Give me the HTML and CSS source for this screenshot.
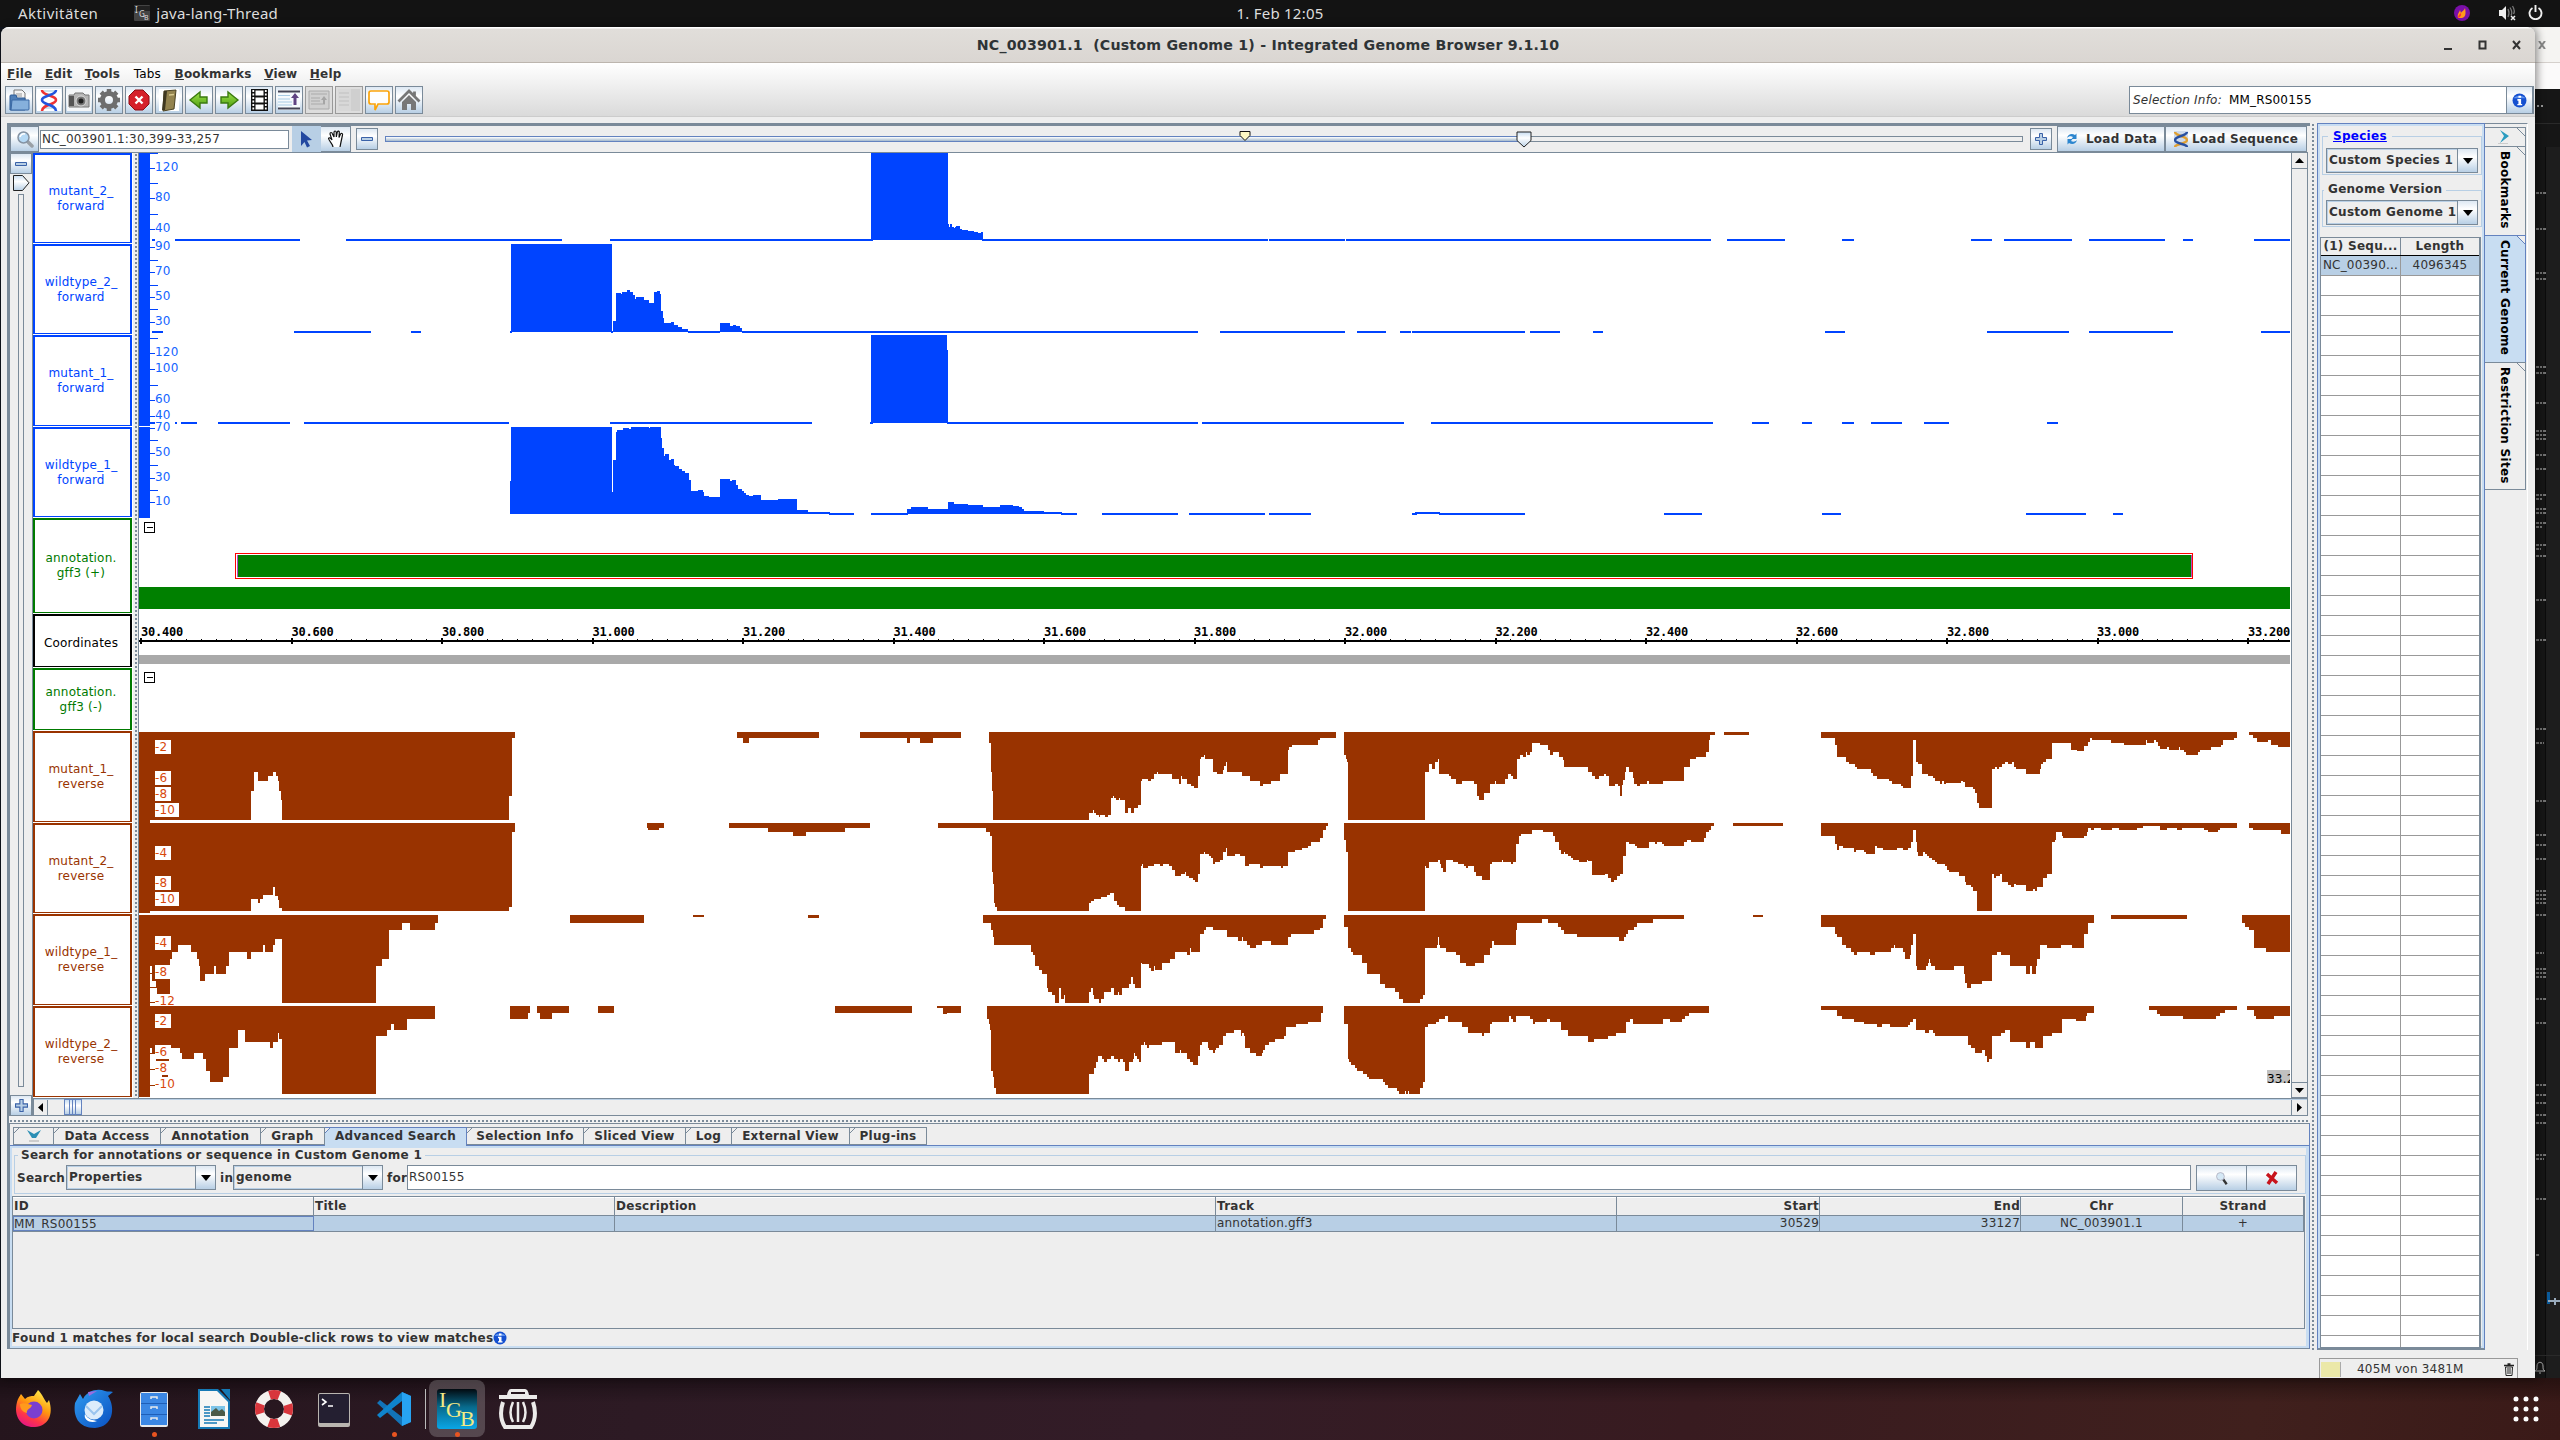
FILE: index.html
```html
<!DOCTYPE html>
<html lang="de">
<head>
<meta charset="utf-8">
<title>Integrated Genome Browser 9.1.10</title>
<link rel="stylesheet" href="styles.css">
</head>
<body>
<svg class="defs" width="0" height="0">
  <defs>
    <linearGradient id="metal" x1="0" y1="0" x2="0" y2="1"><stop offset="0" stop-color="#c8ddf2"/><stop offset=".4" stop-color="#fff"/><stop offset="1" stop-color="#b8cfe5"/></linearGradient>
    <linearGradient id="green" x1="0" y1="0" x2="0" y2="1"><stop offset="0" stop-color="#9be04a"/><stop offset="1" stop-color="#4f9f10"/></linearGradient>
    <linearGradient id="fire" x1=".8" y1="0" x2=".3" y2="1"><stop offset="0" stop-color="#fff44f"/><stop offset=".45" stop-color="#ff980e"/><stop offset=".75" stop-color="#ff3647"/><stop offset="1" stop-color="#e31587"/></linearGradient>
    <linearGradient id="bird" x1="0" y1="0" x2="1" y2="1"><stop offset="0" stop-color="#2f9bf0"/><stop offset="1" stop-color="#0a4fc0"/></linearGradient>
    <linearGradient id="igb" x1="0" y1="0" x2="0" y2="1"><stop offset="0" stop-color="#020a10"/><stop offset=".45" stop-color="#086a8c"/><stop offset="1" stop-color="#0aa6e6"/></linearGradient>
    <symbol id="plus" viewBox="0 0 12 12"><path d="M4.5.5h3v4h4v3h-4v4h-3v-4h-4v-3h4z" fill="#b8cfe5" stroke="#3a62a8"/></symbol>
    <symbol id="minus" viewBox="0 0 12 12"><path d="M.5 4.500h11v3H.5z" fill="#b8cfe5" stroke="#3a62a8"/></symbol>
    <symbol id="info" viewBox="0 0 14 14"><circle cx="7" cy="7" r="6.5" fill="#1550d0"/><path d="M1.500 5a6 4 0 0 1 11 0z" fill="#5e92ee"/><path d="M6 2.500h2.500v2H6zM5 5.700h3.500v4.500h1v1.300H5v-1.300h1v-3H5z" fill="#fff"/></symbol>
    <symbol id="lens" viewBox="0 0 18 18"><path d="M11 11l5 5" stroke="#9aa0a6" stroke-width="3.500" stroke-linecap="round"/><circle cx="7.500" cy="7.500" r="5.500" fill="#b5d9f5" stroke="#8593a3" stroke-width="1.500"/><path d="M4 7a4 4 0 0 1 5-3" stroke="#fff" stroke-width="1.500" fill="none"/></symbol>
  </defs>
</svg>

<header class="topbar">
  <span class="activities">Aktivitäten</span>
  <svg class="appico" width="16" height="16" viewBox="0 0 16 16"><rect width="16" height="16" rx="1" fill="#444"/><rect y="1" width="16" height="5" fill="#222"/><text x="1" y="8" font-size="8" fill="#ddd">I</text><text x="5" y="12" font-size="8" fill="#ddd">G</text><text x="10" y="15" font-size="7" fill="#ddd">B</text></svg>
  <span>java-lang-Thread</span>
  <span class="clock">1. Feb 12:05</span>
  <span class="tray">
    <svg width="16" height="16" viewBox="0 0 16 16"><circle cx="8" cy="8" r="8" fill="#7a0fa8"/><path d="M4 13c-1-4 1-5 2-8l1 3c1-2 3-2 4-5 1 5 1 9-3 10z" fill="#ff9a1a"/><path d="M4 13c0-3 2-4 3-5 0 2 1 3-3 5z" fill="#f33"/></svg>
    <svg class="vol" width="18" height="16" viewBox="0 0 18 16"><path d="M0 5h3l4-4v14l-4-4H0z" fill="#eee"/><path d="M9 4q2 4 0 8M11 2.500q3 5 1 8M13.500 1q3 5 1 8" fill="none" stroke="#777" stroke-width="1.300"/><path d="M12 11l4 4M16 11l-4 4" stroke="#eee" stroke-width="1.500"/></svg>
    <svg width="15" height="15" viewBox="0 0 15 15"><path d="M4.500 3a6 6 0 1 0 6 0M7.500 0v7" fill="none" stroke="#eee" stroke-width="1.900"/></svg>
  </span>
</header>

<main class="workspace">
  <section class="backwin">
    <div class="bt"><svg width="8" height="8" viewBox="0 0 8 8"><path d="M1 0l6 8M7 0L1 8" stroke="#888" stroke-width="2"/></svg></div>
    <div class="bm"></div>
    <div class="bc">
      <svg width="25" height="1289" viewBox="2535 89 25 1289" shape-rendering="crispEdges">
        <path d="M2546 147h14v1231h-14z" fill="#1d1d1d"/><path d="M2545 147h1v1231h-1z" fill="#0c0c0c"/><path d="M2535 123h25M2535 1355h25" stroke="#2a2a2a"/>
        <path d="M2537 106h2m2 0h2" stroke="#999" stroke-width="2"/>
        <path stroke="#707070" stroke-width="2" stroke-dasharray="3 1 2 1" d="M2536 193h10M2536 229h10M2536 273h10M2536 279h10M2536 367h10M2536 373h10M2536 403h10M2536 431h10M2536 435h10M2536 439h10M2536 455h10M2536 469h10M2536 495h10M2536 499h6M2536 509h10M2536 513h10M2536 523h10M2536 527h6M2536 545h10M2536 549h5M2536 556h10M2536 600h10M2536 640h10M2536 729h10M2536 743h8M2536 801h10M2536 835h10M2536 845h10M2536 859h10M2536 891h10M2536 895h10M2536 899h10M2536 903h10M2536 915h10M2536 953h8M2536 969h10M2536 973h10M2536 977h10M2536 999h10M2536 1023h10M2536 1085h10M2536 1095h10M2536 1103h10M2536 1115h10M2536 1123h10M2536 1155h10M2536 1159h8M2536 1199h10M2536 1255h3"/>
        <path d="M2547 1292h3v12h-3z" fill="#0a5a9a"/><path d="M2548 1301h12M2555 1298v7" stroke="#9ab" stroke-width="2"/>
        <path d="M2535 1371c2-1 2-2 2-5 0-5 6-5 6 0 0 3 0 4 2 5zM2539 1373h2" fill="none" stroke="#aaa" shape-rendering="auto"/>
      </svg>
    </div>
  </section>

  <section class="window">
    <div class="titlebar"><span class="title">NC_003901.1&nbsp; (Custom Genome 1) - Integrated Genome Browser 9.1.10</span>
      <span class="wbtns">
        <svg width="9" height="10" viewBox="0 0 9 10"><path d="M0 8h8v2H0z" fill="#333"/></svg>
        <svg width="9" height="10" viewBox="0 0 9 10"><path d="M1.500 1.500h6v7h-6z" fill="none" stroke="#333" stroke-width="2"/></svg>
        <svg width="9" height="10" viewBox="0 0 9 10"><path d="M1 1l7 8M8 1L1 9" stroke="#333" stroke-width="2"/></svg>
      </span>
    </div>
    <div class="header">
      <nav class="menu"><b><u>F</u>ile</b><b><u>E</u>dit</b><b><u>T</u>ools</b><span>Tabs</span><b><u>B</u>ookmarks</b><b><u>V</u>iew</b><b><u>H</u>elp</b></nav>
      <div class="tools">
        <span class="tb"><svg viewBox="0 0 24 24"><path d="M7 2h8l3 3v8H7z" fill="#f4f4f4" stroke="#777"/><path d="M9 6h6M9 8h6" stroke="#999"/><path d="M3 22V8q0-1 1-1h5l1 3h8v12z" fill="#4f7fb8" stroke="#2f5c96"/><path d="M5 12h17v9q0 1-1 1H4z" fill="#86b0dc" stroke="#3a68a4"/></svg></span>
        <span class="tb"><svg viewBox="0 0 24 24"><path d="M0 1h24v22H0z" fill="#fff"/><path d="M7 3h10M8 6h8M8 16h8M7 20h10" stroke="#9cd" stroke-width="1.200"/><path d="M5 2c0 6 14 5 14 10s-14 4-14 11" fill="none" stroke="#e33" stroke-width="2.600"/><path d="M19 2c0 6-14 5-14 10s14 4 14 11" fill="none" stroke="#25d" stroke-width="2.600"/></svg></span>
        <span class="tb"><svg viewBox="0 0 24 24"><path d="M0 1h24v22H0z" fill="#f4f6f8"/><path d="M2 7h5l1-2h8l2 2h4v12H2z" fill="#b5b5b5" stroke="#777"/><path d="M2 8h5v10H2z" fill="#555"/><circle cx="14" cy="13" r="5" fill="#777" stroke="#ddd"/><circle cx="14" cy="13" r="2.500" fill="#222"/></svg></span>
        <span class="tb"><svg viewBox="0 0 24 24"><circle cx="12" cy="12" r="6.500" fill="none" stroke="#6e6e6e" stroke-width="5"/><path d="M12 1v4M12 19v4M1 12h4M19 12h4M4.200 4.200L7 7M17 17l2.800 2.800M19.800 4.200L17 7M7 17l-2.800 2.800" stroke="#6e6e6e" stroke-width="4.500"/></svg></span>
        <span class="tb"><svg viewBox="0 0 24 24"><path d="M8 2h8l6 6v8l-6 6H8l-6-6V8z" fill="#d5202a" stroke="#8c0d14"/><path d="M8.500 8.500l7 7M15.500 8.500l-7 7" stroke="#fff" stroke-width="2.400"/></svg></span>
        <span class="tb"><svg viewBox="0 0 24 24"><path d="M2 1h20v22H2z" fill="#fff"/><path d="M7 3l12-1-2 19-11 2z" fill="#93834f" stroke="#4b4223"/><path d="M7 3l3 0-2 19-3 0z" fill="#3f3820"/><path d="M12 7l5-.5" stroke="#d7c98f" stroke-width="1.500"/></svg></span>
        <span class="tb"><svg viewBox="0 0 24 24"><path d="M3 12l10-8v5h7v6h-7v5z" fill="url(#green)" stroke="#3a7a10" stroke-width="1.400"/></svg></span>
        <span class="tb"><svg viewBox="0 0 24 24"><path d="M21 12L11 4v5H4v6h7v5z" fill="url(#green)" stroke="#3a7a10" stroke-width="1.400"/></svg></span>
        <span class="tb"><svg viewBox="0 0 24 24"><path d="M4 1h17v22H4z" fill="#111"/><path d="M8.500 2.500h8v5h-8zM8.500 9.500h8v5h-8zM8.500 16.500h8v5h-8z" fill="#fff"/><path d="M6.300 2v21M18.800 2v21" stroke="#fff" stroke-width="1.800" stroke-dasharray="2 1.500"/></svg></span>
        <span class="tb"><svg viewBox="0 0 24 24"><path d="M1 2h22v20H1z" fill="#f5fafd"/><path d="M1 3.500h22M1 20.500h22" stroke="#445" stroke-width="2"/><path d="M1 7.500h12M1 11h12M1 14h14M1 17h14" stroke="#a8cbe4"/><path d="M18 5l4 5h-2.500v7h-3v-7H14z" fill="#5f4382"/></svg></span>
        <span class="tb off"><svg viewBox="0 0 24 24"><path d="M2 3h20v18H2z" fill="#d0d0d0" stroke="#aaa"/><path d="M4 6h16M4 10h9M4 13h9M4 16h14" stroke="#aaa"/><path d="M17 8l3 4h-2v4h-2v-4h-2z" fill="#a5a5a5"/></svg></span>
        <span class="tb off"><svg viewBox="0 0 24 24"><path d="M1 1h13v22H1z" fill="#d8d8d8"/><path d="M14 1h9v22h-9z" fill="#cfcfcf"/><path d="M2 5h10M2 9h10M2 13h10M2 17h10" stroke="#c0c0c0"/></svg></span>
        <span class="tb"><svg viewBox="0 0 24 24"><path d="M4 3h16q2 0 2 2v9q0 2-2 2h-9l-3 6v-6H4q-2 0-2-2V5q0-2 2-2z" fill="#fdfdfd" stroke="#fba40a" stroke-width="1.700"/></svg></span>
        <span class="tb"><svg viewBox="0 0 24 24"><path d="M1.500 13.500L12 3l10.500 10.500M17.500 3.500v5" fill="none" stroke="#777" stroke-width="2.800"/><path d="M5 14l7-7 7 7v8h-5v-6h-4v6H5z" fill="#777"/></svg></span>
      </div>
      <div class="selinfo"><i>Selection Info:</i><span>MM_RS00155</span><em class="ibtn"><svg width="15" height="15"><use href="#info"/></svg></em></div>
    </div>

    <div class="body">
      <div class="left">
        <section class="mapPane">
          <div class="zoombar">
            <span class="jb lens"><svg width="18" height="18"><use href="#lens"/></svg></span>
            <span class="loc">NC_003901.1:30,399-33,257</span>
            <span class="jb mode on"><svg width="16" height="18" viewBox="0 0 16 18"><path d="M3 1l11 9-5 .5 3 5.500-3 1.500-2.500-5.500L3 16z" fill="#2348a0"/></svg></span>
            <span class="jb mode"><svg width="18" height="18" viewBox="0 0 18 18"><path d="M6 17c0-3-4-6-4.500-8.500C2 7 4 8 5 10L3 4c0-2 2-2 2.500 0L7 7V2.500c0-2 2-2 2.300 0V7l1-5c.7-1.500 2.300-1 2 .7L12 7.500l1.500-3.500c1-1.300 2.500-.5 2 1L14 12l-1 5" fill="#fff" stroke="#111" stroke-width="1.200"/></svg></span>
            <span class="jb sq"><svg width="12" height="12"><use href="#minus"/></svg></span>
            <span class="hslider"><i class="fill"></i>
              <svg class="auto" width="12" height="10" viewBox="0 0 12 10"><path d="M1 .5h10v4L6 9.500l-5-5z" fill="#fdf8c4" stroke="#111"/></svg>
              <svg class="thumb" width="16" height="17" viewBox="0 0 16 17"><path d="M1 1h14v8.500L8 16 1 9.500z" fill="url(#metal)" stroke="#222"/></svg>
            </span>
            <span class="jb sq"><svg width="12" height="12"><use href="#plus"/></svg></span>
            <b class="jb load d"><svg width="14" height="14" viewBox="0 0 14 14"><path d="M2 6c1-4 5-5 8-3l1.500-1.500V7H6.500L8 5C6 4 4 4 2 6zM12 8c-1 4-5 5-8 3l-1.500 1.500V7h5L6 9c2 1 4 1 6-1z" fill="#2c86cf"/></svg>Load Data</b>
            <b class="jb load s"><svg width="14" height="17" viewBox="0 0 14 17"><path d="M0 0h14v17H0z" fill="#cdd9ea"/><path d="M1 1c0 4 12 4 12 8s-12 4-12 7" fill="none" stroke="#e0a030" stroke-width="2.500"/><path d="M13 1c0 4-12 4-12 8s12 4 12 7" fill="none" stroke="#2850a0" stroke-width="2.500"/></svg>Load Sequence</b>
          </div>
          <div class="maprow">
            <div class="vzoom">
              <span class="jb"><svg width="12" height="12"><use href="#minus"/></svg></span>
              <span class="vtrack"><svg width="17" height="16" viewBox="0 0 17 16"><path d="M.5.500h9L16 7.800 9.500 15.500h-9z" fill="url(#metal)" stroke="#222"/></svg></span>
              <span class="jb p"><svg width="13" height="13" viewBox="0 0 12 12"><use href="#plus"/></svg></span>
            </div>
            <div class="mapcol">
              <div class="mapview">
                <div class="labels">
                  <div class="lb blue h91">mutant_2_<br>forward</div>
                  <div class="lb blue h91">wildtype_2_<br>forward</div>
                  <div class="lb blue h92">mutant_1_<br>forward</div>
                  <div class="lb blue h91">wildtype_1_<br>forward</div>
                  <div class="lb green h96">annotation.<br>gff3 (+)</div>
                  <div class="lb black h54">Coordinates</div>
                  <div class="lb green h63">annotation.<br>gff3 (-)</div>
                  <div class="lb brown h92">mutant_1_<br>reverse</div>
                  <div class="lb brown h91">mutant_2_<br>reverse</div>
                  <div class="lb brown h92">wildtype_1_<br>reverse</div>
                  <div class="lb brown h92">wildtype_2_<br>reverse</div>
                </div>
                <div class="vsplit"></div>
                <svg class="canvas" width="2151" height="945" viewBox="139 153 2151 945">
                  <g class="fwd" shape-rendering="crispEdges">
                    <path d="M139 153h11v273h-11zM139 427h11v91h-11z"/>
                    <path class="base" d="M152 240h3M175 240h125M346 240h216M610 240h263M982 240h286M1269 240h76M1346 240h365M1727 240h58M1842 240h12M1971 240h21M2004 240h68M2089 240h76M2183 240h10M2254 240h36"/>
                    <path class="base" d="M152 332h11M294 332h77M411 332h10M510 332h2M611 332h2M688 332h32M742 332h456M1220 332h125M1357 332h29M1400 332h11M1412 332h113M1530 332h30M1593 332h10M1825 332h20M1987 332h82M2089 332h84M2261 332h29"/>
                    <path class="base" d="M150 423h5M175 423h2M181 423h16M218 423h72M304 423h205M610 423h202M870 423h3M947 423h251M1202 423h202M1431 423h282M1752 423h17M1802 423h10M1842 423h12M1871 423h31M1924 423h25M2047 423h11"/>
                    <path class="base" d="M871 514h37M1061 514h16M1102 514h76M1189 514h76M1269 514h42M1412 514h5M1439 514h86M1664 514h38M1822 514h19M2026 514h60M2113 514h10"/>
                    <path transform="scale(.54847 .33333)" d="M932 732H1116V996H932ZM1118 996V963H1123V879H1132V882H1134V876H1143V870H1149V876H1154V885H1158V897H1160V891H1174V900H1184V909H1192V876H1197V873H1203V882H1205V933H1208V954H1211V969H1223V966H1228V975H1236V981H1243V987H1255V996ZM1313 996V969H1331V978H1337V975H1342V978H1349V984H1352V996Z"/>
                    <path transform="translate(0 330) scale(.54847 .33333)" d="M930 552V453H932V291H1116V486H1118V390H1123V306H1125V300H1136V294H1147V297H1150V291H1183V294H1185V291H1205V324H1207V354H1211V378H1212V372H1220V390H1223V387H1229V405H1231V408H1238V417H1243V423H1249V429H1256V450H1260V483H1273V480H1282V486H1284V498H1293V501H1313V447H1331V453H1335V450H1342V465H1345V477H1352V483H1357V489H1361V495H1366V498H1373V495H1387V510H1418V507H1453V540H1473V546H1513V549H1557V555H1511V552Z"/>
                    <path transform="translate(860 120) scale(.54847 .33333)" d="M20 99H160V312H162V321H164V312H168V321H171V324H173V321H175V318H182V327H186V330H197V333H208V336H215V339H221V336H224V360H20ZM20 645H159V690H160V909H20ZM86 1182V1167H93V1161H124V1167H160V1146H171V1152H197V1155H224V1161H255V1155H279V1158H290V1161H295V1167H299V1173H335V1176H368V1182ZM1012 1176h45v6h-45z"/>
                    <path class="tick" d="M150 153.500h8M150 168.500h5M150 183.500h8M150 198.500h5M150 214.500h8M150 229.500h5M150 247.500h5M150 260.500h8M150 272.500h5M150 285.500h8M150 297.500h5M150 309.500h8M150 322.500h5M150 338.500h8M150 353.500h5M150 369.500h5M150 385.500h8M150 400.500h5M150 416.500h5M150 428.500h5M150 440.500h8M150 453.500h5M150 465.500h8M150 478.500h5M150 490.500h8M150 502.500h5"/>
                  </g>
                  <g class="fl">
                    <text x="155" y="171">120</text><text x="155" y="201">80</text><text x="155" y="232">40</text>
                    <text x="155" y="250">90</text><text x="155" y="275">70</text><text x="155" y="300">50</text><text x="155" y="325">30</text>
                    <text x="155" y="356">120</text><text x="155" y="372">100</text><text x="155" y="403">60</text><text x="155" y="419">40</text>
                    <text x="155" y="431">70</text><text x="155" y="456">50</text><text x="155" y="481">30</text><text x="155" y="505">10</text>
                  </g>
                  <g shape-rendering="crispEdges">
                    <path d="M144.500 522.500h10v10h-10zM147 527.500h6M144.500 672.500h10v10h-10zM147 677.500h6" fill="none" stroke="#000"/>
                    <path d="M235.500 553.500h1957v25h-1957z" fill="#fff" stroke="#f00"/>
                    <path d="M238 555h1953v22H238z" fill="#008000"/><path d="M237.500 555v22M2191.500 555v22" stroke="#b050c0"/>
                    <path d="M139 587h2151v22H139z" fill="#008000"/>
                    <path d="M139 641h2151" stroke="#000" stroke-width="2"/>
                    <path d="M140 641h2150" stroke="#000" stroke-width="6" stroke-dasharray="2 148.500"/>
                    <path d="M140.500 639.500h2150" stroke="#000" stroke-dasharray="1 14.050"/>
                    <path d="M139 655h2151v9H139z" fill="#a9a9a9"/>
                  </g>
                  <g class="ruler">
                    <text x="141" y="636">30.400</text><text x="291.500" y="636">30.600</text><text x="442" y="636">30.800</text><text x="592.500" y="636">31.000</text><text x="743" y="636">31.200</text><text x="893.500" y="636">31.400</text><text x="1044" y="636">31.600</text><text x="1194" y="636">31.800</text><text x="1345" y="636">32.000</text><text x="1495.500" y="636">32.200</text><text x="1646" y="636">32.400</text><text x="1796" y="636">32.600</text><text x="1947" y="636">32.800</text><text x="2097" y="636">33.000</text><text x="2248" y="636">33.200</text>
                  </g>
                  <g class="rev" shape-rendering="crispEdges">
                    <path d="M139 732h11v181h-11zM139 915h11v182h-11z"/>
                    <path transform="translate(0 720) scale(.54847 .33333)" d="M254 36H939V54H934V228H928V300H514V240H512V213H509V183H507V168H503V156H498V168H489V183H470V156H463V213H458V300H254ZM1344 36H1493V54H1366V69H1355V54H1344ZM254 309H939V336H934V561H928V573H514V564H509V540H507V528H501V501H498V525H480V537H474V549H470V537H458V573H254ZM1180 309H1211V324H1202V330H1181V324H1180ZM1329 309H1568V324H1541V336H1470V348H1446V336H1400V324H1329ZM254 585H799V609H793V630H748V609H733V630H709V717H696V738H686V849H514V657H501V675H498V696H483V675H480V696H458V717H450V696H418V738H412V762H394V738H390V762H374V783H365V738H363V717H359V696H348V675H325V696H314V717H310V822H286V804H284V783H277V738H254ZM1039 585H1174V609H1039ZM1264 585h20v6h-20zM1473 585h20v9h-20zM254 858H793V897H742V930H718V912H713V930H706V948H686V1122H514V957H509V939H507V966H498V984H492V966H447V930H434V984H418V1071H407V1086H383V1053H376V1017H370V999H354V1017H332V999H328V984H312V975H283V1000H277V984H254ZM284 1017h24v6h-24zM295 1065h11v6h-11zM930 858H966V879H963V897H930ZM979 858H1037V879H1006V897H985V879H979ZM1090 858h29v21h-29zM1522 858H1568V879H1522Z"/>
                    <path transform="translate(860 700) scale(.54847 .33333)" d="M0 96H184V114H133V129H109V114H91V129H86V114H0ZM235 96H868V114H838V120H835V135H788V141H783V150H780V222H766V243H749V252H735V258H729V243H711V228H697V216H669V186H667V198H664V210H661V222H651V216H644V177H629V165H627V171H622V177H620V228H616V264H609V258H603V252H596V237H587V228H585V252H582V237H569V222H543V216H541V222H536V237H531V243H525V237H514V243H512V315H507V324H500V339H494V324H489V339H483V300H474V294H472V300H467V294H463V288H461V294H458V345H452V351H447V345H438V351H436V345H431V339H427V330H425V339H418V360H242V273H241V216H239V129H235Z
                    M882 96H1559V105H1550V120H1548V156H1543V171H1524V177H1513V201H1502V243H1464V252H1439V243H1435V252H1422V258H1417V252H1411V234H1409V216H1402V201H1397V216H1395V240H1392V255H1390V288H1386V258H1382V252H1377V258H1366V228H1361V222H1357V228H1347V237H1340V228H1334V216H1328V201H1284V180H1281V171H1275V156H1264V165H1258V150H1254V135H1240V129H1226V156H1222V165H1216V156H1214V171H1208V165H1203V177H1197V237H1191V228H1187V222H1181V237H1176V252H1160V243H1158V252H1149V279H1138V300H1129V288H1125V252H1119V243H1098V252H1087V237H1078V228H1073V222H1056V177H1054V186H1048V207H1043V192H1037V216H1030V360H890V186H888V177H886V165H882Z
                    M0 369h18v15h-18zM142 369H853V378H850V390H844V414H839V426H822V438H817V444H806V450H793V456H780V498H771V504H768V498H735V504H729V492H709V498H702V468H693V462H684V468H669V444H667V456H662V480H656V486H647V492H644V474H640V468H636V462H629V456H627V462H620V522H616V546H611V540H607V534H600V528H594V516H592V522H585V528H574V510H569V498H563V492H552V498H547V492H536V498H525V504H516V492H514V498H512V633H483V621H472V615H469V603H463V579H456V585H450V591H439V597H427V603H421V609H418V633H250V621H246V609H244V552H242V516H241V408H237V396H230V384H142Z
                    M882 369H1557V378H1552V390H1548V396H1542V414H1538V426H1515V420H1508V426H1502V438H1466V432H1462V426H1453V432H1449V426H1439V444H1417V438H1413V432H1402V426H1397V468H1391V522H1386V528H1380V540H1375V546H1369V534H1364V522H1358V525H1335V483H1328V480H1326V486H1311V480H1300V474H1296V468H1290V462H1285V456H1284V462H1278V450H1274V426H1268V408H1264V396H1246V390H1226V402H1206V408H1202V432H1196V486H1191V492H1187V486H1173V480H1171V486H1153V492H1149V540H1134V528H1124V516H1119V498H1109V504H1105V498H1101V492H1090V486H1081V480H1068V516H1063V504H1060V492H1057V480H1054V486H1037V504H1032V498H1030V633H890V456H886V420H882Z
                    M224 645H850V657H844V684H839V690H828V702H786V711H780V735H749V723H733V735H722V744H711V735H706V723H698V711H697V723H689V711H669V690H644V681H631V690H627V702H620V756H603V744H602V765H596V756H574V777H565V789H551V810H538V798H536V813H531V804H527V792H514V789H512V864H502V852H498V831H494V852H491V864H478V885H472V876H470V885H463V864H458V876H445V897H439V909H436V897H427V885H425V864H422V876H418V909H374V885H372V897H367V864H363V909H356V885H350V876H343V864H341V822H332V810H326V798H319V765H315V756H312V735H244V711H242V690H239V669H224Z
                    M882 645H1502V657H1446V669H1417V681H1411V690H1400V702H1397V711H1393V723H1384V711H1307V702H1284V690H1278V681H1273V669H1254V657H1243V669H1198V690H1196V735H1156V723H1153V744H1149V765H1138V789H1121V798H1105V789H1094V765H1087V756H1068V744H1057V735H1056V711H1054V735H1052V744H1030V885H1026V897H1021V909H990V897H983V876H975V864H957V852H948V822H924V789H915V765H899V756H895V744H890V681H882Z
                    M0 918h95v21h-95zM140 918H184V939H159V942H151V924H140ZM232 918H844V939H841V966H817V972H795V981H777V1008H773V1017H757V1026H746V1035H738V1050H735V1059H733V1068H722V1059H711V1044H702V1008H700V999H697V1008H695V990H682V999H667V1008H662V1035H655V1044H649V1050H647V1059H644V1050H636V1044H634V1026H624V1035H620V1068H616V1095H607V1086H602V1077H596V1059H585V1050H583V1059H574V1026H551V1035H527V1044H523V1035H520V1026H518V1035H512V1086H509V1077H505V1068H502V1059H500V1077H498V1086H491V1113H483V1086H480V1077H474V1086H470V1077H463V1068H458V1077H450V1086H445V1077H442V1068H434V1086H430V1104H427V1122H418V1182H248V1164H244V1131H242V1113H239V990H237V972H235V957H232Z
                    M882 918H1548V939H1511V948H1505V957H1499V966H1477V957H1464V972H1409V957H1404V966H1397V999H1378V1008H1364V1017H1338V1026H1327V1008H1291V990H1278V966H1258V957H1253V966H1231V972H1227V957H1222V948H1196V966H1191V957H1187V948H1183V966H1153V972H1149V999H1138V1008H1134V999H1109V981H1098V966H1072V948H1067V957H1056V966H1050V972H1036V981H1030V1146H1026V1164H1021V1182H1001V1173H999V1182H996V1173H994V1182H983V1173H979V1164H963V1155H957V1146H954V1137H928V1131H924V1122H917V1113H906V1104H903V1095H895V1086H892V1077H890V972H882Z"/>
                    <path transform="translate(1700 700) scale(.54847 .33333)" d="M44 96h45v9h-45zM221 96H979V114H974V120H954V135H950V141H932V150H912V156H908V165H886V156H883V150H875V141H873V150H855V141H851V147H839V138H835V126H831V120H828V129H815V120H813V135H773V129H749V120H715V114H711V126H707V138H700V153H687V150H676V129H642V177H631V186H625V192H622V207H620V222H594V207H576V201H572V186H569V192H562V186H556V192H551V201H545V207H541V201H538V207H532V324H509V309H505V279H501V267H498V261H483V246H480V243H476V249H449V252H445V243H442V252H438V243H428V234H424V228H415V222H404V192H397V186H394V120H388V228H385V264H370V258H366V252H350V243H345V237H323V228H315V219H311V207H286V201H283V192H272V186H266V171H250V135H246V114H221ZM1001 96H1077V141H1054V135H1041V120H1035V126H1015V114H1009V105H1001Z
                    M60 369h91v9h-91zM221 369H979V384H948V390H944V396H926V390H919V384H879V390H870V384H851V390H839V378H808V384H797V390H764V384H751V390H731V384H718V390H713V384H707V396H705V408H700V414H662V408H660V396H649V420H647V426H642V522H633V534H625V561H614V573H610V567H607V573H594V555H576V552H572V561H567V555H562V546H551V522H547V528H540V534H536V522H532V633H505V573H498V561H494V555H485V546H483V528H472V516H454V510H450V498H446V492H432V486H428V480H423V474H417V468H413V462H410V456H406V468H397V456H396V426H394V390H388V426H385V444H380V450H370V444H359V450H334V444H322V438H319V462H303V456H299V450H284V456H281V444H261V438H253V450H250V432H246V408H221ZM1001 369H1077V402H1059V390H1009V384H1001Z
                    M97 645h18v6h-18zM221 645H718V669H707V702H700V744H678V735H658V744H633V735H620V777H614V798H613V822H605V798H602V822H594V798H565V765H549V756H541V765H532V843H514V852H494V864H487V849H483V822H481V798H463V810H428V798H422V789H419V777H418V789H415V798H412V810H396V798H394V702H388V735H385V765H383V777H374V756H370V744H356V735H354V744H348V756H319V765H310V756H286V765H281V756H275V744H266V735H259V711H250V702H246V681H221ZM749 645h139v12h-139zM988 645H1077V756H1032V744H1010V690H1001V681H994V669H988Z
                    M221 918H718V939H706V948H704V963H686V957H660V999H642V1008H625V1044H611V1026H602V1044H594V1026H565V990H556V999H549V1008H532V1077H527V1086H523V1068H520V1050H514V1059H501V1044H494V1035H489V1008H428V999H424V990H418V999H410V990H394V957H388V966H383V975H379V981H346V972H332V981H323V972H299V966H281V957H259V948H250V930H221ZM819 918H979V930H957V939H948V948H941V957H881V948H839V942H833V930H819ZM997 918H1077V948H1047V957H1014V948H1010V930H997Z"/>
                    <path class="tick" d="M150 973.500h5M150 987.500h6M150 1002.500h5M150 1053.500h5M150 1069.500h5M150 1085.500h5"/>
                    <path class="box" d="M155 740h16v14h-16zM155 771h16v14h-16zM155 787h16v14h-16zM155 803h24v14h-24zM155 846h16v14h-16zM155 876h16v14h-16zM155 892h24v14h-24zM155 936h16v14h-16zM155 965h16v14h-16zM155 1014h16v14h-16zM155 1045h16v13h-16z"/>
                  </g>
                  <g class="rl">
                    <text x="155" y="751">-2</text><text x="155" y="782">-6</text><text x="155" y="798">-8</text><text x="155" y="814">-10</text>
                    <text x="155" y="857">-4</text><text x="155" y="887">-8</text><text x="155" y="903">-10</text>
                    <text x="155" y="947">-4</text><text x="155" y="976">-8</text><text x="155" y="1005">-12</text>
                    <text x="155" y="1025">-2</text><text x="155" y="1056">-6</text><text x="155" y="1072">-8</text><text x="155" y="1088">-10</text>
                  </g>
                  <path d="M2267 1070h23v13h-23z" fill="#c0c0c0"/><text x="2267" y="1082.500">33.2</text>
                </svg>
                <div class="vscroll"><i class="ab"><svg width="9" height="5"><path d="M0 5L4.500 0 9 5z"/></svg></i><i class="ab end"><svg width="9" height="5"><path d="M0 0L4.500 5 9 0z"/></svg></i></div>
              </div>
              <div class="hscroll"><i class="ab"><svg width="5" height="9"><path d="M5 0L0 4.500 5 9z"/></svg></i><i class="hthumb"></i><i class="ab end"><svg width="5" height="9"><path d="M0 0l5 4.500L0 9z"/></svg></i></div>
            </div>
          </div>
        </section>
        <div class="hsplit"></div>
        <section class="tabsPane">
          <div class="tabs">
            <b class="tab w41"><svg width="14" height="12" viewBox="0 0 14 12"><path d="M0 0l7 4 7-4-5 8H5z" fill="#2b8fb5"/><path d="M2 11h10" stroke="#ccc" stroke-width="2"/></svg></b>
            <b class="tab w107">Data Access</b><b class="tab w100">Annotation</b><b class="tab w64">Graph</b><b class="tab w142 on">Advanced Search</b><b class="tab w117">Selection Info</b><b class="tab w102">Sliced View</b><b class="tab w46">Log</b><b class="tab w118">External View</b><b class="tab w77">Plug-ins</b>
          </div>
          <div class="tabbody">
            <fieldset class="search">
              <legend>Search for annotations or sequence in Custom Genome 1</legend>
              <b class="lead">Search</b><span class="combo c150">Properties<i><svg width="10" height="6"><path d="M0 0h10L5 6z"/></svg></i></span><b class="in">in</b><span class="combo c150">genome<i><svg width="10" height="6"><path d="M0 0h10L5 6z"/></svg></i></span><b class="for">for</b>
              <span class="field">RS00155</span>
              <span class="jb sb"><svg width="14" height="14" viewBox="0 0 18 18"><path d="M10 10l5 7" stroke="#333" stroke-width="3"/><circle cx="7" cy="7" r="5" fill="#d5e8f5" stroke="#aab"/></svg></span><span class="jb sb two"><svg width="14" height="14" viewBox="0 0 14 14"><path d="M2 3l10 9M11 1L3 13" stroke="#c8141c" stroke-width="3.500"/></svg></span>
            </fieldset>
            <div class="results">
              <div class="tr th"><b>ID</b><b>Title</b><b>Description</b><b>Track</b><b class="r">Start</b><b class="r">End</b><b class="c">Chr</b><b class="c">Strand</b></div>
              <div class="tr td"><span class="cur">MM_RS00155</span><span></span><span></span><span>annotation.gff3</span><span class="r">30529</span><span class="r">33127</span><span class="c">NC_003901.1</span><span class="c">+</span></div>
            </div>
            <div class="found">Found 1 matches for local search Double-click rows to view matches<svg width="14" height="14"><use href="#info"/></svg></div>
          </div>
        </section>
      </div>
      <div class="vsplit big"></div>
      <aside class="genome">
        <div class="grp g1"><a>Species</a><span class="combo full">Custom Species 1<i><svg width="10" height="6"><path d="M0 0h10L5 6z"/></svg></i></span></div>
        <div class="grp g2"><b>Genome Version</b><span class="combo full">Custom Genome 1<i><svg width="10" height="6"><path d="M0 0h10L5 6z"/></svg></i></span></div>
        <div class="seqs">
          <div class="sh"><b>(1) Sequ...</b><b>Length</b></div>
          <div class="sr"><span>NC_00390...</span><span>4096345</span></div>
          <div class="grid"></div>
        </div>
      </aside>
      <div class="sidetabs">
        <b class="st s0"><svg width="12" height="14" viewBox="0 0 12 14"><path d="M2 0l9 6-9 7 4-7z" fill="#2b9cc0"/><path d="M0 13.500h10" stroke="#ccc"/></svg></b>
        <b class="st s1">Bookmarks</b><b class="st s2 on">Current Genome</b><b class="st s3">Restriction Sites</b>
      </div>
    </div>
    <footer class="status"><div class="mem"><i></i><span>405M von 3481M</span><svg width="10" height="13" viewBox="0 0 10 13"><path d="M0 2.500h10M3.500 1h3" stroke="#222" stroke-width="1.500"/><path d="M1.500 4h7l-.5 8.500H2zM4 5v6M6 5v6" fill="none" stroke="#222"/></svg></div></footer>
  </section>
</main>

<footer class="dock">
  <div class="apps">
    <span class="app"><svg viewBox="0 0 40 40"><path d="M3 13c1-4 3-6 4-8l4 5c3-3 6-3 9-3 1-2 3-4 4-6 5 5 5 8 9 13l2-3c5 15-1 26-14 27C8 39-1 28 3 13z" fill="url(#fire)"/><circle cx="20" cy="21" r="8.500" fill="#7a3fd0"/><path d="M6 15c4-2 8 0 12 1-1 4-6 4-5 8-5-1-7-5-7-9z" fill="#ff9a1c"/></svg></span>
    <span class="app"><svg viewBox="0 0 40 40"><path d="M1 14l5-9 3 5c4-8 14-11 22-8 3 1 5 0 8 1l-5 4c8 12 5 31-13 32C4 39-1 27 1 14z" fill="url(#bird)"/><path d="M14 3l9-1-8 5z" fill="#9a6de0"/><circle cx="20" cy="21" r="9.500" fill="#dcecfb"/><path d="M12 17l8 8 8-8" fill="none" stroke="#9ac4ee" stroke-width="2"/><path d="M11 25c3 6 8 6 12 7-6 3-14-1-12-7z" fill="#fff"/></svg></span>
    <span class="app run"><svg viewBox="0 0 40 40"><rect x="6" y="3" width="28" height="35" rx="2" fill="#e8eaec"/><path d="M7 4h26v32H7z" fill="#3b87e4"/><path d="M7 14.500h26M7 25.500h26" stroke="#1f5fb8"/><path d="M17 10V8h6v2M17 20v-2h6v2M17 31v-2h6v2" fill="none" stroke="#e8eaec" stroke-width="1.500"/></svg></span>
    <span class="app"><svg viewBox="0 0 40 40"><path d="M4 0h20l12 12v28H4z" fill="#1579b5"/><path d="M6 2h17l11 11v25H6z" fill="#f6f6f4"/><path d="M27 0h9v11z" fill="#1579b5"/><path d="M10 18h6M10 21h6M10 24h6M10 27h6M10 31h20M10 34h13" stroke="#1579b5" stroke-width="1.600"/><path d="M17 17h14v10H17z" fill="#7cc4e8"/><path d="M17 27v-4l5-4 3 3 3-2 3 3v4z" fill="#4b5a48"/></svg></span>
    <span class="app"><svg viewBox="0 0 40 40"><circle cx="20" cy="20" r="14.500" fill="none" stroke="#f4f2ee" stroke-width="9"/><circle cx="20" cy="20" r="14.500" fill="none" stroke="#d8363c" stroke-width="9" stroke-dasharray="10 12.777" stroke-dashoffset="5"/></svg></span>
    <span class="app"><svg viewBox="0 0 40 40"><rect x="4" y="4" width="32" height="34" rx="2" fill="#b9b5b0"/><rect x="5" y="5" width="30" height="29" rx="1" fill="#241f31"/><path d="M8 10l4 3-4 3M14 17h5" fill="none" stroke="#fff" stroke-width="1.600"/></svg></span>
    <span class="app run"><svg viewBox="0 0 40 40"><path d="M28 3l9 4v26l-9 4L3 14l3-3 22 17z" fill="#1273b8"/><path d="M28 3L3 26l3 3 22-17z" fill="#0f84cc"/><path d="M28 3l9 4v26l-9 4z" fill="#27a3f2"/></svg></span>
    <i class="sep"></i>
    <span class="app run cur"><svg viewBox="0 0 40 40"><rect width="40" height="40" rx="3" fill="url(#igb)"/><g fill="#f3ea86" font-family="Liberation Serif" font-size="22" letter-spacing="0"><text x="2" y="18">I</text><text x="9" y="28">G</text><text x="23" y="37">B</text></g></svg></span>
    <span class="app"><svg viewBox="0 0 40 40"><path d="M1 6h8q1-6 4-6h14q3 0 4 6h8v4H1zM13 5h14V3H13z" fill="#ecebea" fill-rule="evenodd"/><path d="M5 13C2 22 2 30 7 38h26c5-8 5-16 2-25" fill="none" stroke="#ecebea" stroke-width="4"/><path d="M15 13q-5 11 0 20M20 13v20M25 13q5 11 0 20" fill="none" stroke="#ecebea" stroke-width="2.500"/></svg></span>
  </div>
  <svg class="launcher" width="26" height="26" viewBox="0 0 26 26"><path d="M3 3h.01M13 3h.01M23 3h.01M3 13h.01M13 13h.01M23 13h.01M3 23h.01M13 23h.01M23 23h.01" stroke="#fff" stroke-width="5" stroke-linecap="round"/></svg>
</footer>
</body>
</html>
```
FILE: styles.css
```css
* { box-sizing: border-box; }
body { margin: 0; width: 2560px; height: 1440px; overflow: hidden; display: flex; flex-direction: column; font: 12px/15px "DejaVu Sans", sans-serif; letter-spacing: .2px; color: #333; background: #2c1a24; }
svg { display: block; flex: none; }
b, span { white-space: nowrap; }
b, legend, .combo, .found, .grp > a { letter-spacing: .28px; }
.defs { position: absolute; }

.topbar { height: 27px; flex: none; background: #131313; color: #ddd; display: flex; align-items: center; padding: 0 17px 2px 18px; font: 15px/20px "Noto Sans", sans-serif; letter-spacing: .25px; position: relative; }
.activities { margin-right: 36px; letter-spacing: .45px; }
.appico { margin-right: 6px; letter-spacing: 0; overflow: visible; }
.clock { position: absolute; left: 0; right: 0; text-align: center; }
.tray { margin-left: auto; display: flex; align-items: center; }
.tray .vol { margin: 0 11px 0 29px; }

.workspace { position: relative; height: 1351px; flex: none; background: #10141c; }
.backwin { position: absolute; left: 2530px; right: 0; top: 0; bottom: 0; display: flex; flex-direction: column; }
.bt { height: 36px; background: #f5f4f2; border-bottom: 1px solid #d5d0cc; padding: 14px 0 0 8px; }
.bm { height: 26px; background: #fbfafa; }
.bc { flex: 1; background: #161616; padding-left: 5px; }
.window { position: absolute; left: 1px; top: 0; width: 2534px; height: 1351px; display: flex; flex-direction: column; background: #eee; border-radius: 8px 8px 0 0; overflow: hidden; box-shadow: 2px 0 8px rgba(0,0,0,.45); }
.titlebar { height: 36px; flex: none; background: linear-gradient(#fff 0 1px, #e1deda 2px, #dad6d2); border-bottom: 1px solid #bcb5ae; position: relative; display: flex; align-items: center; justify-content: center; }
.title { font: bold 14.2px/20px "DejaVu Sans", sans-serif; letter-spacing: .2px; color: #2e3436; }
.wbtns { position: absolute; right: 14px; top: 13px; display: flex; gap: 25px; }
.header { height: 54px; flex: none; background: linear-gradient(#fff, #dadada); border-bottom: 1px solid #ccc; display: grid; grid-template-columns: 1fr 404px; grid-template-rows: 23px 30px; }
.menu { grid-column: 1 / 3; display: flex; gap: 12.5px; padding: 4px 0 0 6px; }
.menu b { letter-spacing: .2px; }
.menu span { color: #000; margin: 0 1px; }
.tools { display: flex; gap: 2px; padding-left: 4px; }
.tb { width: 28px; height: 28px; border: 1px solid #7a8a99; background: linear-gradient(#dde8f3, #fff 35%, #b8cfe5); padding: 1px; }
.tb.off { background: #ddd; border-color: #999; }
.tb svg { width: 24px; height: 24px; }
.selinfo { height: 28px; width: 405px; background: #fff; border: 1px solid #7a8a99; display: flex; align-items: center; padding-left: 3px; margin-left: -2px; }
.selinfo span { color: #000; margin-left: 7px; }
.ibtn { margin-left: auto; width: 27px; height: 26px; border-left: 1px solid #7a8a99; border-right: 1px solid #7a8a99; background: linear-gradient(#dde8f3, #fff 35%, #b8cfe5); display: grid; place-items: center; }

.body { display: flex; padding: 6px 0 0 6px; height: 1233px; flex: none; }
.left { width: 2303px; flex: none; display: flex; flex-direction: column; }
.mapPane { height: 993px; flex: none; border: solid #7a8a99; border-width: 3px 0 0 3px; background: #eee; padding-right: 2px; }
.jb { border: 1px solid #7a8a99; background: linear-gradient(#dde8f3, #fff 35%, #b8cfe5); display: flex; align-items: center; justify-content: center; flex: none; }
.zoombar { height: 27px; border-bottom: 1px solid #7a8a99; display: flex; align-items: center; }
.lens { width: 29px; height: 26px; }
.loc { width: 249px; height: 19px; border: 1px solid #7a8a99; background: #fff; padding: 1px 1px; margin: 0 3px 0 1px; }
.mode { width: 30px; height: 26px; border-left: 0; }
.mode.on { width: 29px; background: #b8cfe5; border-color: #b8cfe5; }
.sq { width: 22px; height: 22px; margin-left: 5px; }
.hslider { position: relative; width: 1638px; height: 6px; margin: 0 2px 0 7px; border: 1px solid #7a8a99; background: #eee; }
.hslider .fill { position: absolute; left: -1px; top: -1px; width: 1139px; height: 6px; background: linear-gradient(#fff, #a3b8cc); border: 1px solid #6382bf; }
.hslider .auto { position: absolute; left: 853px; top: -6px; }
.hslider .thumb { position: absolute; left: 1130px; top: -6px; }
.load { height: 26px; gap: 7px; }
.load.d { width: 108px; margin-left: 5px; }
.load.s { width: 142px; gap: 4px; border-left-width: 1px; }
.maprow { display: flex; height: 963px; }
.vzoom { width: 23px; display: flex; flex-direction: column; border-right: 1px solid #7a8a99; }
.vzoom .jb { height: 21px; }
.vtrack { flex: 1; width: 6px; margin: 20px 0 8px 8px; border: 1px solid #7a8a99; position: relative; }
.vtrack svg { position: absolute; left: -6px; top: -20px; }
.mapcol { flex: 1; min-width: 0; }
.mapview { display: flex; height: 945px; background: #fff; }
.labels { width: 100px; padding-right: 1px; flex: none; display: flex; flex-direction: column; }
.lb { border: 2px solid; border-bottom-width: 1px; margin-bottom: 1px; padding-right: 3px; display: flex; align-items: center; justify-content: center; text-align: center; flex: none; }
.blue { color: #04f; } .green { color: #007a00; } .black { color: #000; padding-top: 5px; } .brown { color: #930; }
.h91 { height: 90px; } .h92 { height: 91px; } .h96 { height: 95px; } .h54 { height: 53px; } .h63 { height: 62px; }
.vsplit { width: 6px; flex: none; background: radial-gradient(circle, #7a8a99 .8px, transparent 1px) 0 0 / 6px 4px #eee; border-right: 1px solid #7a8a99; }
.vsplit.big { width: 7px; border: 0; }
.canvas { width: 2151px; height: 945px; font-family: "DejaVu Sans", sans-serif; font-size: 12px; }
.fwd { fill: #04f; } .rev { fill: #930; }
.base { stroke: #04f; stroke-width: 2; }
.fwd .tick { stroke: #04f; } .rev .tick { stroke: #930; } .rev .box { fill: #fff; }
.fl { fill: #1464ff; } .rl { fill: #d8480c; }
.ruler { font-family: "DejaVu Sans Mono", monospace; font-weight: bold; letter-spacing: -.2px; }
.vscroll { flex: 1; border: 1px solid #7a8a99; border-width: 0 1px 0 1px; margin-left: 1px; display: flex; flex-direction: column; justify-content: space-between; background: #eee; }
.ab { display: grid; place-items: center; background: #eee; }
.vscroll .ab { height: 16px; border-bottom: 1px solid #7a8a99; }
.vscroll .ab.end { border-top: 1px solid #7a8a99; }
.hscroll { height: 18px; border: 1px solid #7a8a99; display: flex; align-items: stretch; box-shadow: inset 0 1px #b8cfe5; }
.hscroll .ab { width: 14px; border-right: 1px solid #7a8a99; margin-top: 1px; }
.hscroll .ab.end { margin-left: auto; border: 0; border-left: 1px solid #7a8a99; width: 16px; }
.hthumb { width: 18px; margin-left: 16px; border: 1px solid #6382bf; background: linear-gradient(90deg, transparent 4px, #6382bf 4px 5px, transparent 5px 7px, #6382bf 7px 8px, transparent 8px 10px, #6382bf 10px 11px, transparent 11px), linear-gradient(#c8ddf2, #fff 40%, #b8cfe5); }
.hsplit { height: 7px; flex: none; background: radial-gradient(circle, #7a8a99 .8px, transparent 1px) 0 2px / 4px 6px repeat-x #f2f2f2; border-left: 2px solid #7a8a99; }

.tabsPane { flex: 1; border: 1px solid #7a8a99; border-left-width: 3px; border-right-color: #6382bf; padding-top: 3px; margin-bottom: 1px; display: flex; flex-direction: column; }
.tabs { display: flex; height: 19px; padding-left: 3px; border-bottom: 1px solid #6382bf; flex: none; }
.tab { display: flex; align-items: center; justify-content: center; height: 18px; background: linear-gradient(135deg, #eee 3px, #7a8a99 3px 4px, transparent 4px); border: 1px solid #7a8a99; border-left: 0; }
.tab.on { background: linear-gradient(135deg, #eee 3px, #6382bf 3px 4px, #c8ddf2 4px); border-color: #6382bf; height: 20px; border-bottom: 0; padding-bottom: 2px; }
.w41 { width: 41px; border-left: 1px solid #7a8a99; } .w107 { width: 107px; } .w100 { width: 100px; } .w64 { width: 64px; } .w142 { width: 142px; } .w117 { width: 117px; } .w102 { width: 102px; } .w46 { width: 46px; } .w118 { width: 118px; } .w77 { width: 77px; }
.tabbody { flex: 1; border: 2px solid #c8ddf2; border-width: 2px 3px 2px 2px; display: flex; flex-direction: column; }
.search { margin: 0 0 0 2px; padding: 3px 8px 0 2px; height: 46px; min-width: 0; border: 1px solid #b8cfe5; display: flex; }
.search legend { font-weight: bold; padding: 0 3px; margin-left: 1px; height: 14px; line-height: 15px; }
.search b { align-self: flex-start; padding-top: 6px; }
.search .lead { width: 49px; }
.search .in { width: 17px; padding-left: 4px; } .search .for { width: 24px; padding-left: 4px; }
.combo { border: 1px solid #7a8a99; height: 25px; display: flex; align-items: center; font-weight: bold; padding-left: 2px; box-shadow: inset 0 0 0 1px #b8cfe5; background: #eee; flex: none; }
.combo i { margin-left: auto; width: 20px; height: 100%; border-left: 1px solid #7a8a99; background: linear-gradient(#dde8f3, #fff 35%, #b8cfe5); display: grid; place-items: center; }
.c150 { width: 150px; }
.field { flex: 1; height: 25px; border: 1px solid #7a8a99; background: #fff; padding: 4px 1px; margin-right: 5px; }
.sb { width: 51px; height: 26px; } .sb.two { border-left: 0; width: 50px; }
.results { height: 133px; flex: none; border: 1px solid #7a8a99; margin: 2px 1px 0 0; }
.tr { display: grid; grid-template-columns: 301px 301px 601px 401px 203px 201px 162px 1fr; }
.tr > * { border-right: 1px solid #7a8a99; padding: 1px 1px; overflow: hidden; }
.tr > .r { text-align: right; padding-right: 0; } .tr > .c { text-align: center; }
.th { height: 19px; border-bottom: 1px solid #7a8a99; box-shadow: inset 0 1px #fff; line-height: 17px; }
.td { height: 16px; background: #b8cfe5; border-bottom: 1px solid #7a8a99; }
.td > * { padding-top: 0; }
.td .cur { border: 1px solid #6382bf; line-height: 14px; padding-left: 0; }
.found { font-weight: bold; display: flex; padding-top: 2px; flex: 1; background: #eee; }

.genome { width: 168px; flex: none; border: 1px solid #6382bf; border-bottom: 2px solid #7a8a99; box-shadow: inset 0 0 0 2px #c8ddf2; padding: 2px 4px 3px 2px; }
.grp { border: 1px solid #b8cfe5; margin: 10px -2px 0 2px; height: 39px; padding: 11px 3px 0; position: relative; }
.grp.g2 { margin-top: 15px; height: 37px; padding-top: 9px; }
.grp > a, .grp > b { position: absolute; top: -9px; left: 1px; background: #eee; padding: 0 4px; font-weight: bold; }
.grp > a { color: #00f; text-decoration: underline; left: 5px; padding: 0 5px; top: -8px; }
.grp .full { width: 152px; height: 25px; }
.seqs { margin-top: 10px; border: 1px solid #7a8a99; border-right-width: 2px; height: 1111px; width: 161px; background: #fff; display: flex; flex-direction: column; }
.sh, .sr { display: grid; grid-template-columns: 80px 1fr; flex: none; }
.sh { height: 18px; background: #eee; border-bottom: 1px solid #000; text-align: center; line-height: 17px; }
.sh > b:first-child { border-right: 1px solid #7a8a99; }
.sr { height: 20px; background: #b8cfe5; border-bottom: 1px solid #999; text-align: center; line-height: 19px; }
.sr > :first-child { border-right: 1px solid #999; }
.grid { flex: 1; background: linear-gradient(90deg, transparent 79px, #999 79px 80px, transparent 80px), repeating-linear-gradient(transparent 0 19px, #999 19px 20px); }
.sidetabs { width: 43px; padding-top: 3px; border-top: 1px solid #7a8a99; border-right: 1px solid #fff; display: flex; flex-direction: column; }
.st { width: 41px; border: 1px solid #7a8a99; border-left: 0; border-bottom: 0; padding-right: 2px; writing-mode: vertical-rl; color: #000; display: flex; align-items: center; justify-content: center; background: linear-gradient(225deg, #eee 5px, #7a8a99 5px 6px, transparent 6px); }
.s0 { height: 19px; } .s1 { height: 89px; padding-bottom: 3px; } .s2 { height: 127px; padding-bottom: 3px; } .s3 { height: 128px; padding-bottom: 1px; border-bottom: 1px solid #7a8a99; }
.st.on { background: linear-gradient(225deg, #eee 5px, #6382bf 5px 6px, #c8ddf2 6px); border-color: #6382bf; }

.status { flex: 1; display: flex; justify-content: flex-end; padding: 8px 17px 1px 0; }
.mem { width: 199px; border: 1px solid #999; display: flex; align-items: center; padding: 3px 3px 1px 1px; }
.mem i { width: 20px; height: 15px; background: #ebe8a8; border-right: 1px solid #aaa; margin-right: 16px; }
.mem svg { margin-left: auto; }

.dock { flex: 1; background: linear-gradient(rgba(0,0,0,.35), transparent 25px), linear-gradient(100deg, #25151d, #2d1a24 25%, #331c27 45%, #381b20 66%, #40201d 88%, #3a1a18); display: flex; align-items: center; justify-content: space-between; padding-right: 21px; }
.apps { display: flex; padding-left: 4px; }
.app { width: 60px; height: 62px; display: grid; place-items: center; position: relative; }
.app svg { width: 40px; height: 40px; position: relative; overflow: visible; }
.app.cur { width: 56px; height: 57px; margin: 2px 3px 0 3px; background: rgba(255,255,255,.2); border-radius: 8px; }
.app.run::after { content: ""; position: absolute; width: 5px; height: 5px; border-radius: 50%; background: #e95420; bottom: 3px; left: calc(50% - 2px); }
.app.cur::after { bottom: 0; }
.sep { width: 1px; height: 40px; background: #bbb; margin: 11px 0 0 1px; }
```
